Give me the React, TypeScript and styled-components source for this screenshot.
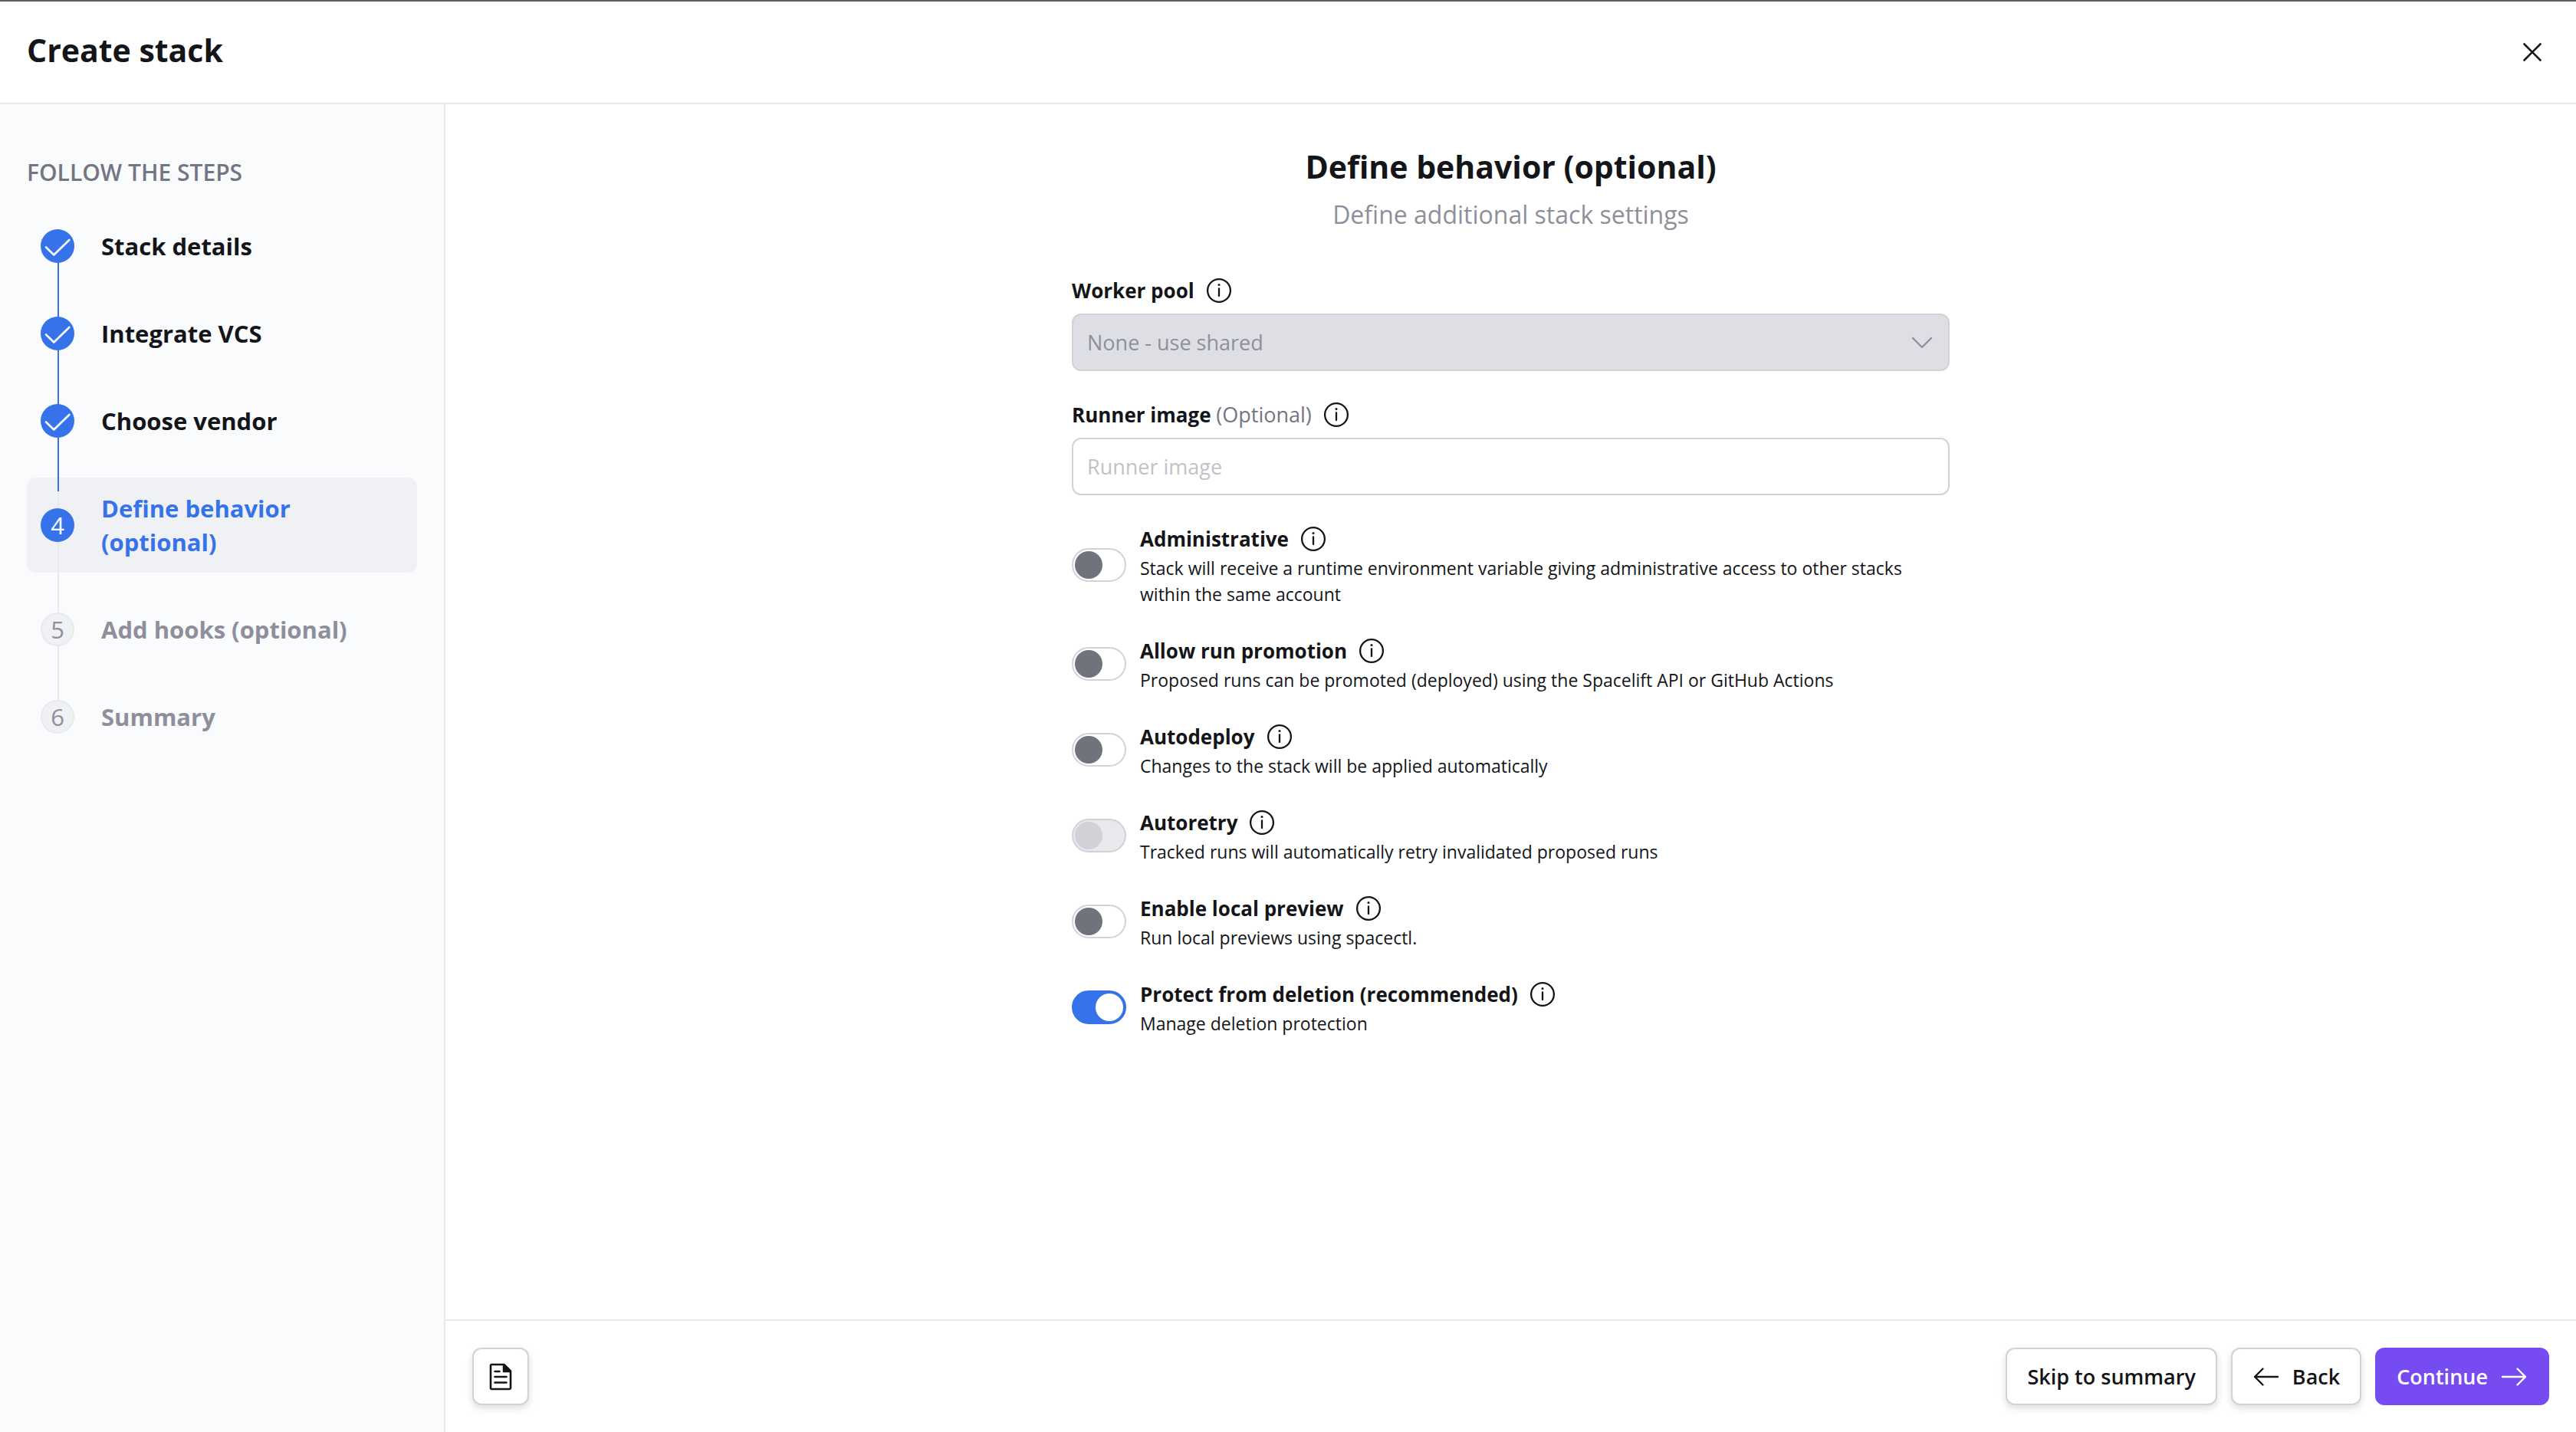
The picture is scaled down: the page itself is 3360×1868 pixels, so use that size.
import React, { useState } from 'react';
import styled, { createGlobalStyle, css } from 'styled-components';

const color = {
  text: '#141519',
  muted: '#747582',
  subtle: '#8e8f9b',
  placeholder: '#c2c2c9',
  border: '#d1d1d8',
  divider: '#e8e9ed',
  surface: '#fafbfd',
  hover: '#f0f1f5',
  disabled: '#dedfe4',
  blue: '#3673ea',
  purple: '#764bf2',
};

const GlobalStyle = createGlobalStyle`
  *, *::before, *::after { box-sizing: border-box; }
  body {
    margin: 0;
    background: #fff;
    color: ${color.text};
    font-family: "Open Sans", "Noto Sans", sans-serif;
    font-size: 27px;
    line-height: 42px;
  }
  h1, h2, p, ol { margin: 0; padding: 0; }
  button, input, select { font: inherit; color: inherit; }
  button { cursor: pointer; }
`;

const Page = styled.div`
  display: flex;
  flex-direction: column;
  min-height: 100vh;
  border-top: 2px solid #5f5c64;
`;

const Header = styled.header`
  display: flex;
  align-items: flex-start;
  justify-content: space-between;
  padding: 32px 35px 38px;
  border-bottom: 2px solid ${color.divider};
`;

const PageTitle = styled.h1`
  font-size: 41px;
  line-height: 62px;
  font-weight: 700;
`;

const IconButton = styled.button`
  display: inline-flex;
  padding: 0;
  border: 0;
  background: none;
`;

const CloseButton = styled(IconButton)`
  padding: 16px 4px 8px;
`;

const Body = styled.div`
  flex: 1;
  display: flex;
`;

const Sidebar = styled.nav`
  flex: 0 0 581px;
  padding: 68px 35px;
  background: ${color.surface};
  border-right: 2px solid ${color.divider};
  isolation: isolate;
`;

const SidebarTitle = styled.h2`
  margin-bottom: 35px;
  font-size: 30px;
  line-height: 42px;
  font-weight: 600;
  color: ${color.muted};
  text-transform: uppercase;
`;

const StepList = styled.ol`
  display: flex;
  flex-direction: column;
  gap: 34px;
  list-style: none;
`;

type StepState = 'done' | 'current' | 'todo';

const StepItem = styled.li<{ $state: StepState }>`
  position: relative;

  &:not(:last-child)::after {
    content: '';
    position: absolute;
    z-index: 1;
    left: 40px;
    top: 18px;
    bottom: -52px;
    width: 2px;
    background: ${(p) => (p.$state === 'done' ? color.blue : color.divider)};
  }
`;

const StepButton = styled.button<{ $state: StepState }>`
  display: flex;
  align-items: center;
  gap: 35px;
  width: 100%;
  padding: 18px;
  border: 0;
  border-radius: 12px;
  background: ${(p) => (p.$state === 'current' ? color.hover : 'transparent')};
  color: ${(p) =>
    p.$state === 'current' ? color.blue : p.$state === 'done' ? color.text : color.subtle};
  font-size: 31px;
  line-height: 44px;
  font-weight: 700;
  text-align: left;
`;

const Marker = styled.span<{ $state: StepState }>`
  position: relative;
  z-index: 2;
  flex: none;
  display: flex;
  align-items: center;
  justify-content: center;
  width: 44px;
  height: 44px;
  border-radius: 50%;
  font-weight: 400;
  ${(p) =>
    p.$state === 'todo'
      ? css`
          background: ${color.hover};
          border: 2px solid ${color.divider};
        `
      : css`
          background: ${color.blue};
          color: #fff;
        `}
`;

const Content = styled.div`
  flex: 1;
  min-width: 0;
  display: flex;
  flex-direction: column;
`;

const Main = styled.main`
  flex: 1;
  width: 100%;
  max-width: 1217px;
  margin: 0 auto;
  padding: 50px 36px;
`;

const Intro = styled.div`
  margin-bottom: 56px;
  text-align: center;
`;

const Heading = styled.h2`
  margin-bottom: 10px;
  font-size: 41px;
  line-height: 62px;
  font-weight: 700;
`;

const Subheading = styled.p`
  font-size: 32px;
  line-height: 44px;
  color: ${color.subtle};
`;

const Form = styled.form`
  display: flex;
  flex-direction: column;
  gap: 36px;
`;

const Field = styled.div`
  display: flex;
  flex-direction: column;
  gap: 9px;
`;

const LabelRow = styled.div`
  display: flex;
  align-items: center;
  gap: 14px;
  height: 42px;
`;

const Label = styled.label`
  font-size: 26px;
  font-weight: 700;
`;

const Optional = styled.span`
  font-size: 27px;
  font-weight: 400;
  color: ${color.muted};
`;

const control = css`
  width: 100%;
  height: 75px;
  padding: 0 18px;
  border: 2px solid ${color.border};
  border-radius: 12px;
  font-size: 27px;
`;

const TextInput = styled.input`
  ${control}
  background: #fff;
  &::placeholder { color: ${color.placeholder}; opacity: 1; }
`;

const SelectBox = styled.div`
  display: grid;
  align-items: center;
  > * { grid-area: 1 / 1; }
  > svg {
    justify-self: end;
    margin-right: 18px;
    pointer-events: none;
    color: ${color.subtle};
  }
`;

const Select = styled.select`
  ${control}
  appearance: none;
  background: ${color.disabled};
  color: ${color.subtle};
  opacity: 1;
`;

const SwitchRow = styled.div`
  display: flex;
  align-items: center;
  gap: 18px;
`;

const SwitchText = styled.div`
  flex: 1;
`;

const Switch = styled.input`
  appearance: none;
  flex: none;
  display: flex;
  align-items: center;
  width: 71px;
  height: 44px;
  margin: 0;
  padding: 2px;
  border: 2px solid ${color.border};
  border-radius: 22px;
  background: #fff;

  &::before {
    content: '';
    width: 36px;
    height: 36px;
    border-radius: 50%;
    background: #70727c;
  }
  &:checked {
    justify-content: flex-end;
    border-color: ${color.blue};
    background: ${color.blue};
  }
  &:checked::before { background: #fff; }
  &:disabled { background: #e8e9ed; border-color: #d1d2d7; }
  &:disabled::before { background: #d1d2d7; }
`;

const Description = styled.p`
  font-size: 23px;
  line-height: 34px;
`;

const Footer = styled.footer`
  display: flex;
  align-items: center;
  justify-content: space-between;
  padding: 35px;
  border-top: 2px solid ${color.divider};
`;

const Actions = styled.div`
  display: flex;
  gap: 18px;
`;

const Button = styled.button<{ $primary?: boolean; $square?: boolean }>`
  display: inline-flex;
  align-items: center;
  justify-content: center;
  gap: 16px;
  height: 75px;
  min-width: 74px;
  padding: 0 ${(p) => (p.$square ? 0 : 26)}px;
  border: 2px solid ${(p) => (p.$primary ? color.purple : color.border)};
  border-radius: 12px;
  background: ${(p) => (p.$primary ? color.purple : '#fff')};
  color: ${(p) => (p.$primary ? '#fff' : color.text)};
  box-shadow: ${(p) => (p.$primary ? 'none' : '0 4px 10px rgba(20, 21, 25, 0.14)')};
  font-weight: 600;
`;

const Svg = ({ size = 36, width = 2, children }: { size?: number; width?: number; children: React.ReactNode }) => (
  <svg
    width={size}
    height={size}
    viewBox={`0 0 ${size} ${size}`}
    fill="none"
    stroke="currentColor"
    strokeWidth={width}
    strokeLinecap="round"
    strokeLinejoin="round"
    aria-hidden="true"
  >
    {children}
  </svg>
);

const CheckIcon = () => (
  <Svg size={44} width={2.6}>
    <path d="M7 23.5 17.3 33.5 37.3 14" />
  </Svg>
);

const CloseIcon = () => (
  <Svg width={2.6}>
    <path d="M7.5 7.5 28.5 28.5M28.5 7.5 7.5 28.5" />
  </Svg>
);

const InfoIcon = () => (
  <Svg width={2.3}>
    <circle cx="18" cy="18" r="14.9" />
    <path d="M18 15.5v9.5" />
    <circle cx="18" cy="10.6" r="1.5" fill="currentColor" stroke="none" />
  </Svg>
);

const ChevronIcon = () => (
  <Svg width={2.4}>
    <path d="M6 12 18 24 30 12" />
  </Svg>
);

const ArrowLeft = () => (
  <Svg width={2.4}>
    <path d="M33 18H3M13.5 7.5 3 18l10.5 10.5" />
  </Svg>
);

const ArrowRight = () => (
  <Svg width={2.4}>
    <path d="M3 18h30M22.5 7.5 33 18 22.5 28.5" />
  </Svg>
);

const DocumentIcon = () => (
  <Svg width={2.6}>
    <path d="M6.5 2H22.5L31 10.5V32.5a1.5 1.5 0 0 1-1.5 1.5H6.5A1.5 1.5 0 0 1 5 32.5V3.5A1.5 1.5 0 0 1 6.5 2Z" />
    <path d="M21.5 2V11.5H31Z" fill="currentColor" stroke="currentColor" strokeWidth={1.5} />
    <path d="M10.5 11h6M10.5 18h15M10.5 25.5h15" />
  </Svg>
);

const Info = ({ about }: { about: string }) => (
  <IconButton type="button" aria-label={`About ${about}`}>
    <InfoIcon />
  </IconButton>
);

const steps: { label: string; state: StepState }[] = [
  { label: 'Stack details', state: 'done' },
  { label: 'Integrate VCS', state: 'done' },
  { label: 'Choose vendor', state: 'done' },
  { label: 'Define behavior (optional)', state: 'current' },
  { label: 'Add hooks (optional)', state: 'todo' },
  { label: 'Summary', state: 'todo' },
];

const switches = [
  {
    id: 'administrative',
    label: 'Administrative',
    text: 'Stack will receive a runtime environment variable giving administrative access to other stacks within the same account',
  },
  {
    id: 'promotion',
    label: 'Allow run promotion',
    text: 'Proposed runs can be promoted (deployed) using the Spacelift API or GitHub Actions',
  },
  { id: 'autodeploy', label: 'Autodeploy', text: 'Changes to the stack will be applied automatically' },
  {
    id: 'autoretry',
    label: 'Autoretry',
    text: 'Tracked runs will automatically retry invalidated proposed runs',
    disabled: true,
  },
  { id: 'preview', label: 'Enable local preview', text: 'Run local previews using spacectl.' },
  { id: 'protect', label: 'Protect from deletion (recommended)', text: 'Manage deletion protection' },
];

export default function App() {
  const [enabled, setEnabled] = useState<Record<string, boolean>>({ protect: true });
  const toggle = (id: string) => setEnabled((prev) => ({ ...prev, [id]: !prev[id] }));

  return (
    <>
      <GlobalStyle />
      <Page>
        <Header>
          <PageTitle>Create stack</PageTitle>
          <CloseButton type="button" aria-label="Close">
            <CloseIcon />
          </CloseButton>
        </Header>
        <Body>
          <Sidebar aria-label="Steps">
            <SidebarTitle>Follow the steps</SidebarTitle>
            <StepList>
              {steps.map(({ label, state }, i) => (
                <StepItem key={label} $state={state}>
                  <StepButton type="button" $state={state} aria-current={state === 'current' ? 'step' : undefined}>
                    <Marker $state={state}>{state === 'done' ? <CheckIcon /> : i + 1}</Marker>
                    <span>{label}</span>
                  </StepButton>
                </StepItem>
              ))}
            </StepList>
          </Sidebar>
          <Content>
            <Main>
              <Intro>
                <Heading>Define behavior (optional)</Heading>
                <Subheading>Define additional stack settings</Subheading>
              </Intro>
              <Form>
                <Field>
                  <LabelRow>
                    <Label htmlFor="worker-pool">Worker pool</Label>
                    <Info about="worker pool" />
                  </LabelRow>
                  <SelectBox>
                    <Select id="worker-pool" disabled>
                      <option>None - use shared</option>
                    </Select>
                    <ChevronIcon />
                  </SelectBox>
                </Field>
                <Field>
                  <LabelRow>
                    <Label htmlFor="runner-image">
                      Runner image <Optional>(Optional)</Optional>
                    </Label>
                    <Info about="runner image" />
                  </LabelRow>
                  <TextInput id="runner-image" type="text" placeholder="Runner image" />
                </Field>
                {switches.map((s) => (
                  <SwitchRow key={s.id}>
                    <Switch
                      id={s.id}
                      type="checkbox"
                      role="switch"
                      checked={!!enabled[s.id]}
                      disabled={s.disabled}
                      onChange={() => toggle(s.id)}
                      aria-describedby={`${s.id}-text`}
                    />
                    <SwitchText>
                      <LabelRow>
                        <Label htmlFor={s.id}>{s.label}</Label>
                        <Info about={s.label} />
                      </LabelRow>
                      <Description id={`${s.id}-text`}>{s.text}</Description>
                    </SwitchText>
                  </SwitchRow>
                ))}
              </Form>
            </Main>
            <Footer>
              <Button type="button" $square aria-label="Documentation">
                <DocumentIcon />
              </Button>
              <Actions>
                <Button type="button">Skip to summary</Button>
                <Button type="button">
                  <ArrowLeft />
                  Back
                </Button>
                <Button type="button" $primary>
                  Continue
                  <ArrowRight />
                </Button>
              </Actions>
            </Footer>
          </Content>
        </Body>
      </Page>
    </>
  );
}
